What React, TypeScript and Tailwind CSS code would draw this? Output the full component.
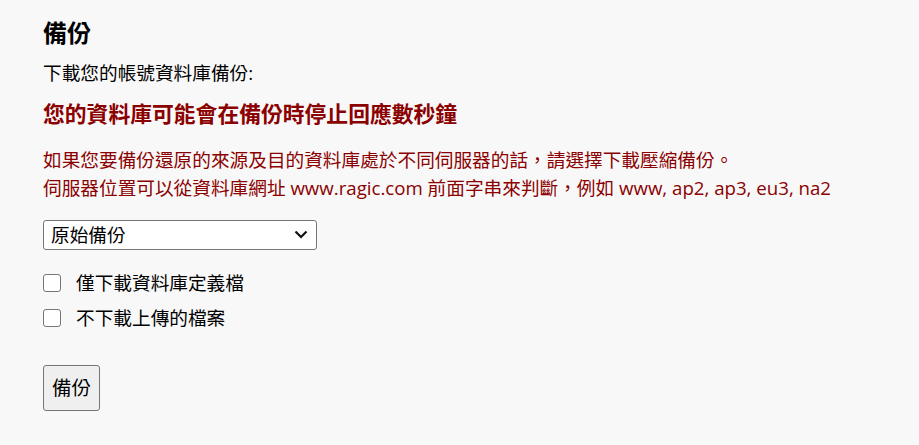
import React, { useState } from 'react';

const font = { fontFamily: '"Open Sans", "Noto Sans CJK TC", sans-serif' };

export default function App() {
  const [mode, setMode] = useState('raw');
  const [defOnly, setDefOnly] = useState(false);
  const [noFiles, setNoFiles] = useState(false);

  return (
    <div
      className="min-h-[445px] w-full bg-[#f8f8f8] text-[18.67px] text-black pl-[43px] pt-[13px] font-['Open_Sans','Noto_Sans_CJK_TC',sans-serif]"
    >
      <h1 className="text-[24px] font-bold leading-[40px]">備份</h1>
      <p className="mt-[6px] leading-[28px]">下載您的帳號資料庫備份:</p>
      <h3 className="mt-[11px] text-[21.8px] font-bold leading-[32px] text-[#8b0000]">
        您的資料庫可能會在備份時停止回應數秒鐘
      </h3>
      <div className="mt-[16px] leading-[28px] text-[#8b0000]">
        <div>如果您要備份還原的來源及目的資料庫處於不同伺服器的話，請選擇下載壓縮備份。</div>
        <div>伺服器位置可以從資料庫網址 www.ragic.com 前面字串來判斷，例如 www, ap2, ap3, eu3, na2</div>
      </div>

      <div className="relative mt-[18px] w-[274px]">
        <select
          value={mode}
          onChange={(e) => setMode(e.target.value)}
          className="h-[30px] w-full appearance-none rounded-[3px] border border-[#767676] bg-white pl-[7px] text-[18.67px] leading-[28px] text-black outline-none"
        >
          <option value="raw">原始備份</option>
          <option value="zip">壓縮備份</option>
        </select>
        <svg
          className="pointer-events-none absolute right-[9px] top-[10px]"
          width="14"
          height="9"
          viewBox="0 0 14 9"
        >
          <path d="M1.5 1.5 L7 7 L12.5 1.5" fill="none" stroke="#111" strokeWidth="2.2" />
        </svg>
      </div>

      <div className="mt-[21px] flex flex-col gap-[11px]">
        <label className="flex items-center gap-[15px] leading-[24px]">
          <input
            type="checkbox"
            checked={defOnly}
            onChange={(e) => setDefOnly(e.target.checked)}
            className="h-[18px] w-[18px] appearance-none rounded-[3px] border border-[#767676] bg-white"
          />
          <span>僅下載資料庫定義檔</span>
        </label>
        <label className="flex items-center gap-[15px] leading-[24px]">
          <input
            type="checkbox"
            checked={noFiles}
            onChange={(e) => setNoFiles(e.target.checked)}
            className="h-[18px] w-[18px] appearance-none rounded-[3px] border border-[#767676] bg-white"
          />
          <span>不下載上傳的檔案</span>
        </label>
      </div>

      <button
        className="mt-[35px] h-[46px] w-[57px] rounded-[3px] border border-[#767676] bg-[#efefef] text-[19.5px] text-black"
        style={font}
      >
        備份
      </button>
    </div>
  );
}
